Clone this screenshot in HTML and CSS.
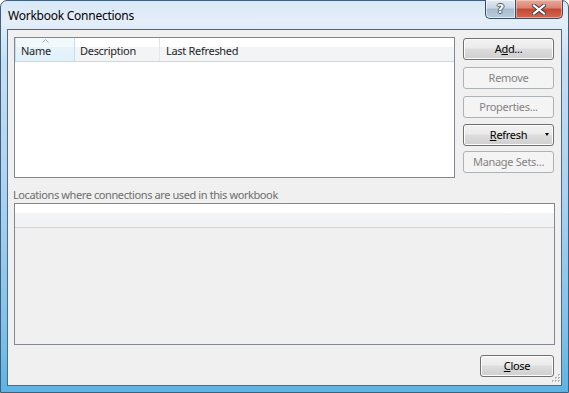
FILE: index.html
```html
<!DOCTYPE html>
<html>
<head>
<meta charset="utf-8">
<link rel="stylesheet" href="styles.css">
</head>
<body>
<div class="window">
  <div class="titlebar">
    <div class="title">Workbook Connections</div>
    <div class="caption-buttons">
      <div class="cap help"><span>?</span></div>
      <div class="cap close-x">
        <svg width="14" height="11" viewBox="0 0 14 11"><path d="M2 1.5 L12 9.5 M12 1.5 L2 9.5" stroke="#3a3a3a" stroke-width="4" stroke-linecap="square"/><path d="M2 1.5 L12 9.5 M12 1.5 L2 9.5" stroke="#fff" stroke-width="2.2" stroke-linecap="square"/></svg>
      </div>
    </div>
  </div>
  <div class="client">
    <div class="top">
      <div class="list list-main">
        <div class="header">
          <div class="col col-name sorted">
            <svg class="sort" width="7" height="4" viewBox="0 0 7 4"><path d="M0.5 3.5 L3.5 0.5 L6.5 3.5" fill="none" stroke="#9db4cc" stroke-width="1"/></svg>
            Name
          </div>
          <div class="col col-desc">Description</div>
          <div class="col col-last">Last Refreshed</div>
        </div>
      </div>
      <div class="buttons">
        <div class="btn b-add">A<u>d</u>d...</div>
        <div class="btn disabled b-remove">Remove</div>
        <div class="btn disabled b-props">Properties...</div>
        <div class="btn split b-refresh"><span class="lbl"><u>R</u>efresh</span><span class="arrow"></span></div>
        <div class="btn disabled b-manage">Manage Sets...</div>
      </div>
    </div>
    <div class="label">Locations where connections are used in this workbook</div>
    <div class="list list-loc">
      <div class="header2"></div>
    </div>
    <div class="footer">
      <div class="btn b-close"><u>C</u>lose</div>
    </div>
    <svg class="grip" width="10" height="10" viewBox="0 0 10 10">
      <g fill="#b4b4b4">
        <rect x="8" y="0" width="2" height="2"/>
        <rect x="5" y="3" width="2" height="2"/><rect x="8" y="3" width="2" height="2"/>
        <rect x="2" y="6" width="2" height="2"/><rect x="5" y="6" width="2" height="2"/><rect x="8" y="6" width="2" height="2"/>
      </g>
      <g fill="#fff">
        <rect x="9" y="1" width="1" height="1"/>
        <rect x="6" y="4" width="1" height="1"/><rect x="9" y="4" width="1" height="1"/>
        <rect x="3" y="7" width="1" height="1"/><rect x="6" y="7" width="1" height="1"/><rect x="9" y="7" width="1" height="1"/>
      </g>
    </svg>
  </div>
</div>
</body>
</html>
```
FILE: styles.css
```css
html, body {
  margin: 0;
  padding: 0;
  background: #ffffff;
}
body {
  width: 569px;
  height: 393px;
  overflow: hidden;
  font-family: "Noto Sans", "Open Sans", sans-serif;
  font-size: 11px;
  letter-spacing: -0.3px;
  color: #000;
}
.window {
  box-sizing: border-box;
  width: 569px;
  height: 393px;
  border: 1px solid #3f5f7c;
  border-radius: 7px 7px 0 0;
  background: linear-gradient(to bottom, #d8e8f6 0px, #e4eef8 20px, #c6def3 60px, #a9d1f0 200px, #7fc0ea 330px, #5cb3e3 393px);
  padding: 0 6px 6px 6px;
  display: flex;
  flex-direction: column;
}
.titlebar {
  height: 28px;
  display: flex;
  justify-content: space-between;
  align-items: flex-start;
}
.title {
  padding: 6px 0 0 1px;
  font-size: 12px;
  color: #000;
  letter-spacing: -0.25px;
}
.caption-buttons {
  display: flex;
  margin-right: -1px;
  margin-top: -1px;
}
.cap {
  height: 19px;
  box-sizing: border-box;
  border: 1px solid #3d4d5e;
  border-top: none;
  display: flex;
  align-items: center;
  justify-content: center;
}
.help {
  width: 30px;
  border-radius: 0 0 0 5px;
  border-right: none;
  background: linear-gradient(to bottom, #e2eaf3 0%, #c8d6e4 45%, #a7bbcf 50%, #b9ccdd 100%);
  box-shadow: inset 0 0 0 1px rgba(255,255,255,0.55);
}
.help span {
  font-family: "DejaVu Sans", sans-serif;
  font-weight: bold;
  font-size: 13px;
  letter-spacing: 0;
  color: #fff;
  text-shadow: 1px 0 0 #4a5866, -1px 0 0 #4a5866, 0 1px 0 #4a5866, 0 -1px 0 #4a5866;
  margin-top: -1px;
}
.close-x {
  width: 48px;
  border-radius: 0 0 5px 0;
  background: linear-gradient(to bottom, #e9a89b 0%, #d98270 45%, #c34732 50%, #d26a52 100%);
  box-shadow: inset 0 0 0 1px rgba(255,220,210,0.5);
}
.client {
  position: relative;
  flex: 1;
  background: #f0f0f0;
  border: 1px solid #52687e;
  padding: 7px 7px 0 6px;
  display: flex;
  flex-direction: column;
}
.top {
  display: flex;
  gap: 8px;
}
.list {
  box-sizing: border-box;
  border: 1px solid #828790;
  background: #fff;
}
.list-main {
  width: 441px;
  height: 141px;
}
.header {
  display: flex;
  height: 23px;
  border-bottom: 1px solid #d5d5d5;
  background: linear-gradient(to bottom, #ffffff 0%, #ffffff 40%, #f3f4f6 41%, #f3f4f6 100%);
}
.col {
  position: relative;
  box-sizing: border-box;
  padding: 5px 0 0 6px;
  border-right: 1px solid #e3e5e8;
  color: #1e1e1e;
}
.col-name {
  width: 60px;
}
.col-name.sorted {
  background: linear-gradient(to bottom, #f2f9fd 0%, #f2f9fd 40%, #e6f3fb 41%, #e1f1fa 100%);
  border: 1px solid #c1def2;
  border-top: none;
  border-bottom: none;
  padding-left: 5px;
}
.sort {
  position: absolute;
  left: 26px;
  top: 1px;
}
.col-desc {
  width: 85px;
  padding-left: 5px;
}
.col-last {
  flex: 1;
  border-right: none;
}
.buttons {
  display: flex;
  flex-direction: column;
  width: 91px;
  padding-top: 1px;
}
.btn {
  box-sizing: border-box;
  height: 22px;
  border: 1px solid #707070;
  border-radius: 3px;
  background: linear-gradient(to bottom, #f2f2f2 0%, #ebebeb 45%, #dddddd 50%, #cfcfcf 100%);
  box-shadow: inset 0 0 0 1px #fcfcfc;
  display: flex;
  align-items: center;
  justify-content: center;
  color: #000;
  padding-bottom: 1px;
}
.btn.disabled {
  border-color: #adb2b5;
  background: #f4f4f4;
  box-shadow: none;
  color: #838383;
}
.b-remove { margin-top: 7px; }
.b-props { margin-top: 7px; }
.b-refresh { margin-top: 6px; }
.b-manage { margin-top: 5px; }
.split {
  position: relative;
}
.split .arrow {
  position: absolute;
  right: 4px;
  top: 8px;
  width: 0;
  height: 0;
  border-left: 2.5px solid transparent;
  border-right: 2.5px solid transparent;
  border-top: 3px solid #000;
}
.label {
  margin-top: 9px;
  height: 16px;
  color: #6d6d6d;
  letter-spacing: -0.4px;
  margin-left: -1px;
}
.list-loc {
  width: 541px;
  height: 142px;
  background: #f0f0f0;
}
.header2 {
  height: 23px;
  border-bottom: 1px solid #d5d5d5;
  background: linear-gradient(to bottom, #ffffff 0%, #ffffff 40%, #f3f4f6 41%, #f1f2f4 100%);
}
.footer {
  display: flex;
  justify-content: flex-end;
  margin-top: 10px;
}
.b-close {
  width: 74px;
}
.grip {
  position: absolute;
  right: 1px;
  bottom: 1px;
}
```
